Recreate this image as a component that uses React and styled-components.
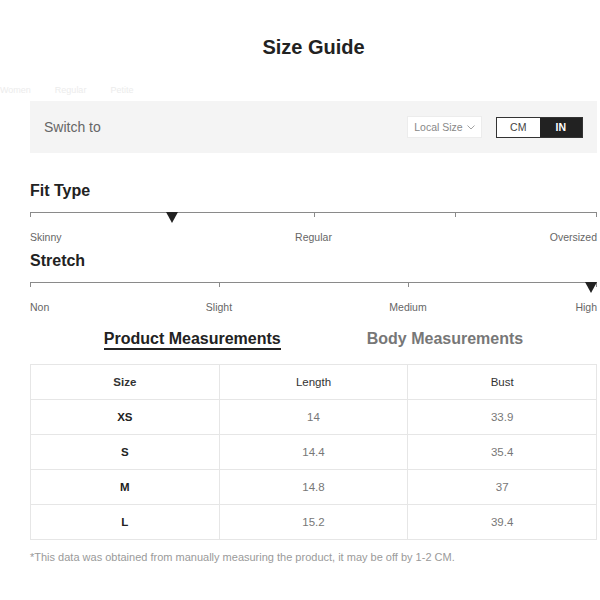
import styled, { createGlobalStyle } from "styled-components";

const GlobalStyle = createGlobalStyle`
  body {
    margin: 0;
    background: #fff;
    font-family: "Liberation Sans", Arial, sans-serif;
  }
`;

const fitTicks = [
  { pos: 0, label: "Skinny" },
  { pos: 50, label: "Regular" },
  { pos: 75, label: "" },
  { pos: 100, label: "Oversized" },
];

const stretchTicks = [
  { pos: 0, label: "Non" },
  { pos: 33.33, label: "Slight" },
  { pos: 66.67, label: "Medium" },
  { pos: 100, label: "High" },
];

const rows = [
  { size: "XS", length: "14", bust: "33.9" },
  { size: "S", length: "14.4", bust: "35.4" },
  { size: "M", length: "14.8", bust: "37" },
  { size: "L", length: "15.2", bust: "39.4" },
];

function Scale({ title, ticks, marker }) {
  return (
    <ScaleBlock>
      <SectionTitle>{title}</SectionTitle>
      <Track>
        {ticks.map((t) => (
          <Tick key={t.pos} style={{ left: `${t.pos}%` }} $end={t.pos === 100} />
        ))}
        <Marker style={{ left: `${marker}%` }} $end={marker >= 100} />
      </Track>
      <Labels>
        {ticks.map((t) =>
          t.label ? (
            <TickLabel
              key={t.pos}
              style={{ left: `${t.pos}%` }}
              $align={t.pos === 0 ? "start" : t.pos === 100 ? "end" : "mid"}
            >
              {t.label}
            </TickLabel>
          ) : null
        )}
      </Labels>
    </ScaleBlock>
  );
}

export default function App() {
  return (
    <>
      <GlobalStyle />
      <Page>
        <Title>Size Guide</Title>
        <Ghost>
          <span>Women</span>
          <span>Regular</span>
          <span>Petite</span>
        </Ghost>
        <SwitchBar>
          <SwitchLabel>Switch to</SwitchLabel>
          <Controls>
            <LocalSelect>
              Local Size
              <svg width="8" height="5" viewBox="0 0 8 5">
                <path d="M0.5 0.5 L4 4 L7.5 0.5" fill="none" stroke="#999" strokeWidth="0.9" />
              </svg>
            </LocalSelect>
            <Toggle>
              <ToggleOption>CM</ToggleOption>
              <ToggleOption $active>IN</ToggleOption>
            </Toggle>
          </Controls>
        </SwitchBar>

        <Scale title="Fit Type" ticks={fitTicks} marker={25} />
        <Scale title="Stretch" ticks={stretchTicks} marker={100} />

        <Tabs>
          <Tab $active>Product Measurements</Tab>
          <Tab>Body Measurements</Tab>
        </Tabs>

        <Table>
          <thead>
            <tr>
              <HeadCell $strong>Size</HeadCell>
              <HeadCell>Length</HeadCell>
              <HeadCell>Bust</HeadCell>
            </tr>
          </thead>
          <tbody>
            {rows.map((r) => (
              <tr key={r.size}>
                <Cell $strong>{r.size}</Cell>
                <Cell>{r.length}</Cell>
                <Cell>{r.bust}</Cell>
              </tr>
            ))}
          </tbody>
        </Table>

        <Note>*This data was obtained from manually measuring the product, it may be off by 1-2 CM.</Note>
      </Page>
    </>
  );
}

const Page = styled.div`
  width: 567px;
  padding: 36px 0 0 30px;
`;

const Title = styled.h1`
  margin: 0;
  text-align: center;
  font-size: 20px;
  line-height: 22px;
  font-weight: 700;
  color: #222;
`;

const Ghost = styled.div`
  display: flex;
  gap: 24px;
  margin: 27px 0 0 -30px;
  height: 10px;
  font-size: 9px;
  line-height: 10px;
  color: #ececec;
`;

const SwitchBar = styled.div`
  display: flex;
  align-items: center;
  justify-content: space-between;
  height: 52px;
  margin-top: 6px;
  padding: 0 14px;
  background: #f4f4f4;
`;

const SwitchLabel = styled.span`
  font-size: 14px;
  color: #666;
`;

const Controls = styled.div`
  display: flex;
  align-items: center;
  gap: 14px;
`;

const LocalSelect = styled.div`
  display: flex;
  align-items: center;
  justify-content: center;
  gap: 4px;
  box-sizing: border-box;
  width: 75px;
  height: 22px;
  background: #fff;
  border: 1px solid #ececec;
  font-size: 10.5px;
  color: #888;
`;

const Toggle = styled.div`
  display: flex;
  box-sizing: border-box;
  width: 87px;
  height: 21px;
  border: 1px solid #333;
`;

const ToggleOption = styled.div`
  flex: 1;
  display: flex;
  align-items: center;
  justify-content: center;
  font-size: 10.5px;
  font-weight: ${(p) => (p.$active ? 700 : 400)};
  background: ${(p) => (p.$active ? "#222" : "#fff")};
  color: ${(p) => (p.$active ? "#fff" : "#444")};
`;

const ScaleBlock = styled.div`
  margin-top: 28px;

  & + & {
    margin-top: 7px;
  }
`;

const SectionTitle = styled.h3`
  margin: 0;
  font-size: 16px;
  line-height: 20px;
  font-weight: 700;
  color: #222;
`;

const Track = styled.div`
  position: relative;
  margin-top: 11px;
  height: 1px;
  background: #8a8a8a;
`;

const Tick = styled.span`
  position: absolute;
  top: 0;
  width: 1px;
  height: 5px;
  background: #8a8a8a;
  transform: translateX(${(p) => (p.$end ? "-1px" : "0")});
`;

const Marker = styled.span`
  position: absolute;
  top: 0;
  width: 0;
  height: 0;
  border-left: 6.5px solid transparent;
  border-right: 6.5px solid transparent;
  border-top: 11px solid #222;
  transform: translateX(${(p) => (p.$end ? "-100%" : "-50%")});
`;

const Labels = styled.div`
  position: relative;
  height: 14px;
  margin-top: 17px;
`;

const TickLabel = styled.span`
  position: absolute;
  top: 0;
  font-size: 10.5px;
  line-height: 14px;
  color: #666;
  white-space: nowrap;
  transform: translateX(
    ${(p) => (p.$align === "start" ? "0" : p.$align === "end" ? "-100%" : "-50%")}
  );
`;

const Tabs = styled.div`
  display: flex;
  justify-content: center;
  gap: 86px;
  margin-top: 16px;
`;

const Tab = styled.div`
  font-size: 16px;
  line-height: 18px;
  font-weight: 700;
  color: ${(p) => (p.$active ? "#222" : "#777")};
  border-bottom: 2.5px solid ${(p) => (p.$active ? "#222" : "transparent")};
`;

const Table = styled.table`
  width: 100%;
  margin-top: 14px;
  border-collapse: collapse;
  table-layout: fixed;
`;

const HeadCell = styled.th`
  height: 34px;
  padding: 0;
  border: 1px solid #e6e6e6;
  font-size: 11.5px;
  font-weight: ${(p) => (p.$strong ? 700 : 400)};
  color: #333;
  text-align: center;
`;

const Cell = styled.td`
  height: 34px;
  padding: 0;
  border: 1px solid #e6e6e6;
  font-size: 11.5px;
  font-weight: ${(p) => (p.$strong ? 700 : 400)};
  color: ${(p) => (p.$strong ? "#222" : "#777")};
  text-align: center;
`;

const Note = styled.p`
  margin: 10px 0 0;
  font-size: 11px;
  line-height: 14px;
  color: #9a9a9a;
`;
